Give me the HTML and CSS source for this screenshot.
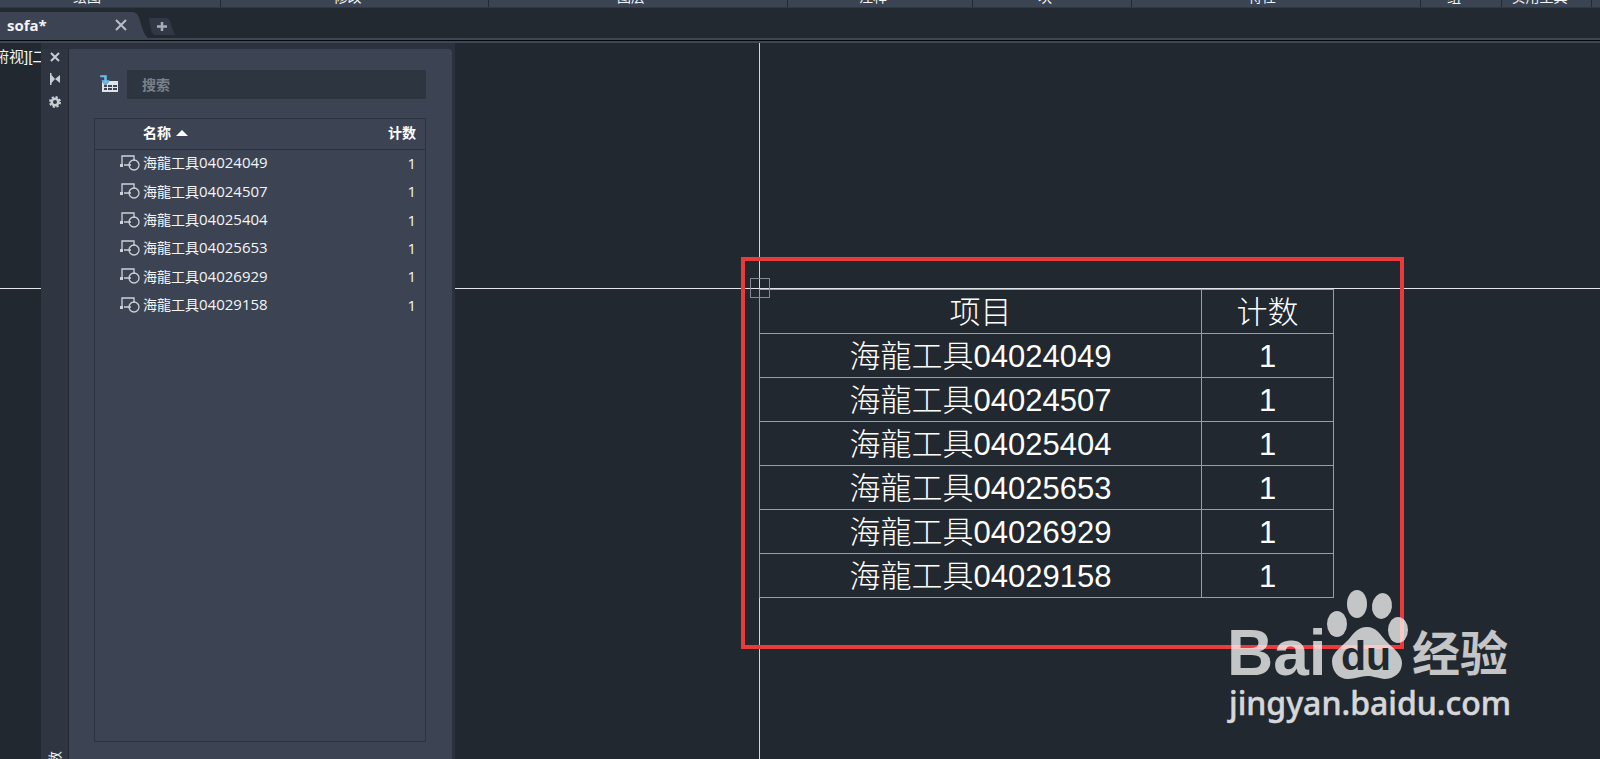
FILE: index.html
```html
<!DOCTYPE html>
<html lang="zh-CN">
<head>
<meta charset="utf-8">
<title>sofa</title>
<link rel="stylesheet" href="styles.css">
</head>
<body>
<div class="ribbon">
  <div class="panel p-draw">绘图</div>
  <div class="panel p-modify">修改</div>
  <div class="panel p-layer">图层</div>
  <div class="panel p-note">注释</div>
  <div class="panel p-block">块</div>
  <div class="panel p-props">特性</div>
  <div class="panel p-group">组</div>
  <div class="panel p-tools">实用工具</div>
  <div class="panel p-more"></div>
</div>
<nav class="tabs">
  <div class="tab">
    <span class="tab-name">sofa*</span>
    <button class="icon-btn" aria-label="关闭">
      <svg width="12" height="12" viewBox="0 0 12 12"><path d="M1 1L11 11M11 1L1 11" stroke="#b9bec6" stroke-width="2"/></svg>
    </button>
  </div>
  <svg class="tail" width="22" height="28" viewBox="0 0 22 28"><path d="M0 0C6 0 7 5 9 12C12 22 14 27 22 28H0Z" fill="#3c4453"/></svg>
  <button class="add" aria-label="新建">
    <svg width="26" height="17" viewBox="0 0 26 17"><path d="M0 0H16C21 0 22 5 23 9C24 13 25 15 26 17H7C3 17 2 12 1 7Z" fill="#323845"/><path d="M13 4V13M8 8.500H18" stroke="#a9aeb7" stroke-width="2.500"/></svg>
  </button>
</nav>
<main class="canvas">
  <div class="view-label">俯视][二</div>
  <div class="cross-h"></div>
  <div class="cross-v"></div>

  <table class="cad">
    <thead><tr><th class="cad-item">项目</th><th>计数</th></tr></thead>
    <tbody>
      <tr><td>海龍工具04024049</td><td>1</td></tr>
      <tr><td>海龍工具04024507</td><td>1</td></tr>
      <tr><td>海龍工具04025404</td><td>1</td></tr>
      <tr><td>海龍工具04025653</td><td>1</td></tr>
      <tr><td>海龍工具04026929</td><td>1</td></tr>
      <tr><td>海龍工具04029158</td><td>1</td></tr>
    </tbody>
  </table>
  <div class="pick"></div>
  <div class="frame"></div>

  <svg class="mark" width="300" height="150" viewBox="0 0 300 150">
    <g fill="#fff" opacity="0.73">
      <text class="bai" x="7" y="94">Bai</text>
      <ellipse cx="117" cy="43" rx="10" ry="13"/>
      <ellipse cx="137" cy="23" rx="10" ry="14"/>
      <ellipse cx="162" cy="25" rx="10" ry="13" transform="rotate(8 162 25)"/>
      <ellipse cx="178" cy="49" rx="10" ry="13"/>
      <path d="M147 46C156 46 160 53 165 59C171 66 182 72 182 82C182 92 174 98 164 98C157 97 153 95 147 95C141 95 135 98 128 98C118 98 112 90 112 80C112 71 122 66 129 58C134 52 138 46 147 46Z"/>
      <text class="jingyan" x="192" y="90">经验</text>
    </g>
    <text class="du" x="121" y="89">du</text>
    <text class="site" x="9" y="134">jingyan.baidu.com</text>
  </svg>

  <section class="palette">
    <div class="rail">
      <button class="icon-btn" aria-label="关闭">
        <svg width="10" height="10" viewBox="0 0 10 10"><path d="M1 1L9 9M9 1L1 9" stroke="#c9cdd4" stroke-width="2"/></svg>
      </button>
      <button class="icon-btn" aria-label="自动隐藏">
        <svg width="10" height="12" viewBox="0 0 10 12"><path d="M0 0H1.500V12H0ZM1.500 2L5 6L1.500 10ZM10 2V10L5 6Z" fill="#c9cdd4"/></svg>
      </button>
      <button class="icon-btn" aria-label="特性">
        <svg width="12" height="12" viewBox="-6 -6 12 12"><circle r="3.300" fill="none" stroke="#c9cdd4" stroke-width="2.600"/><circle r="5.100" fill="none" stroke="#c9cdd4" stroke-width="1.800" stroke-dasharray="2.200 1.805"/></svg>
      </button>
      <div class="rail-title">计数</div>
    </div>
    <div class="body">
      <div class="search-row">
        <button class="icon-btn" aria-label="插入表格">
          <svg width="18" height="17" viewBox="0 0 18 17"><path d="M2 6H18V17H2Z" fill="#dfe2e6"/><path d="M4 10H7V12H4ZM8 10H12V12H8ZM13 10H17V12H13ZM4 13H7V15H4ZM8 13H12V15H8ZM13 13H17V15H13Z" fill="#3c4453"/><path d="M0 0H7V5H10L5.500 10.500L1 5H4V2.500H0Z" fill="#6cb7ee" stroke="#3c4453" stroke-width=".4"/></svg>
        </button>
        <input class="search" type="text" placeholder="搜索" aria-label="搜索">
      </div>
      <div class="list">
        <table class="items">
          <thead><tr><th class="name-h">名称 <svg width="12" height="6" viewBox="0 0 12 6"><path d="M6 0L12 6H0Z" fill="#fff"/></svg></th><th class="count">计数</th></tr></thead>
          <tbody>
            <tr><td><div class="item"><svg width="20" height="16" viewBox="0 0 20 16"><g fill="none" stroke="#cdd2d9" stroke-width="1.300"><path d="M2 9V1H14V6M4 10H11"/><circle cx="14" cy="10" r="5"/></g><path d="M0 9H3V12H0Z" fill="#cdd2d9"/></svg><span><span class="zh">海龍工具</span>04024049</span></div></td><td class="count">1</td></tr>
            <tr><td><div class="item"><svg width="20" height="16" viewBox="0 0 20 16"><g fill="none" stroke="#cdd2d9" stroke-width="1.300"><path d="M2 9V1H14V6M4 10H11"/><circle cx="14" cy="10" r="5"/></g><path d="M0 9H3V12H0Z" fill="#cdd2d9"/></svg><span><span class="zh">海龍工具</span>04024507</span></div></td><td class="count">1</td></tr>
            <tr><td><div class="item"><svg width="20" height="16" viewBox="0 0 20 16"><g fill="none" stroke="#cdd2d9" stroke-width="1.300"><path d="M2 9V1H14V6M4 10H11"/><circle cx="14" cy="10" r="5"/></g><path d="M0 9H3V12H0Z" fill="#cdd2d9"/></svg><span><span class="zh">海龍工具</span>04025404</span></div></td><td class="count">1</td></tr>
            <tr><td><div class="item"><svg width="20" height="16" viewBox="0 0 20 16"><g fill="none" stroke="#cdd2d9" stroke-width="1.300"><path d="M2 9V1H14V6M4 10H11"/><circle cx="14" cy="10" r="5"/></g><path d="M0 9H3V12H0Z" fill="#cdd2d9"/></svg><span><span class="zh">海龍工具</span>04025653</span></div></td><td class="count">1</td></tr>
            <tr><td><div class="item"><svg width="20" height="16" viewBox="0 0 20 16"><g fill="none" stroke="#cdd2d9" stroke-width="1.300"><path d="M2 9V1H14V6M4 10H11"/><circle cx="14" cy="10" r="5"/></g><path d="M0 9H3V12H0Z" fill="#cdd2d9"/></svg><span><span class="zh">海龍工具</span>04026929</span></div></td><td class="count">1</td></tr>
            <tr><td><div class="item"><svg width="20" height="16" viewBox="0 0 20 16"><g fill="none" stroke="#cdd2d9" stroke-width="1.300"><path d="M2 9V1H14V6M4 10H11"/><circle cx="14" cy="10" r="5"/></g><path d="M0 9H3V12H0Z" fill="#cdd2d9"/></svg><span><span class="zh">海龍工具</span>04029158</span></div></td><td class="count">1</td></tr>
          </tbody>
        </table>
      </div>
    </div>
  </section>
</main>
</body>
</html>
```
FILE: styles.css
```css
* { box-sizing: border-box; }

body {
  margin: 0;
  height: 100vh;
  display: flex;
  flex-direction: column;
  overflow: hidden;
  background: #22282f;
  color: #f2f4f6;
  font-family: "Open Sans", "Noto Sans CJK SC", sans-serif;
  font-size: 15px;
}

button {
  border: 0;
  padding: 0;
  background: none;
}

.icon-btn { display: flex; }

/* ribbon footer */
.ribbon {
  display: flex;
  height: 8px;
  background: #3b4453;
  border-bottom: 1px solid #323843;
  overflow: hidden;
}

.panel {
  display: flex;
  align-items: flex-end;
  justify-content: center;
  height: 7px;
  padding: 0 14px 4px 0;
  border-right: 1px solid #242a33;
  font-family: "Noto Sans CJK SC", sans-serif;
  font-size: 14px;
  line-height: 14px;
  white-space: nowrap;
}

.p-draw { flex: 1 1 221px; padding-right: 46px; }
.p-modify { flex: 1 1 268px; }
.p-layer { flex: 1 1 299px; }
.p-note { flex: 1 1 185px; }
.p-block { flex: 1 1 159px; }
.p-props { flex: 1 1 289px; padding-right: 28px; }
.p-group { flex: 1 1 81px; }
.p-tools { flex: 1 1 90px; }
.p-more { flex: 0 0 8px; padding: 0; border: 0; }

/* file tabs */
.tabs {
  display: flex;
  height: 35px;
  padding-top: 4px;
  background: linear-gradient(#232931 30px, #3f4654 30px, #3f4654 32px, #05070c 32px, #05070c 33px, #3f4654 33px);
}

.tab {
  display: flex;
  align-items: center;
  justify-content: space-between;
  width: 132px;
  height: 28px;
  padding: 0 5px 2px 7px;
  background: #3c4453;
  font-weight: 700;
}

.tail { display: block; }

.add {
  height: 17px;
  margin-top: 6px;
  margin-left: -5px;
}

.add svg { display: block; }

/* drawing area */
.canvas {
  position: relative;
  flex: 1;
  display: flex;
  overflow: hidden;
}

.view-label {
  width: 41px;
  padding-top: 4px;
  overflow: hidden;
  white-space: nowrap;
  text-indent: -6px;
  font-family: "Liberation Sans", "Noto Sans CJK SC", sans-serif;
  font-size: 15px;
  line-height: 20px;
}

.cross-h {
  position: absolute;
  left: 0;
  right: 0;
  top: 245px;
  height: 1px;
  background: #e3e5ea;
}

.cross-v {
  position: absolute;
  left: 759px;
  top: 0;
  bottom: 0;
  width: 1px;
  background: #d3d5da;
}

.cad {
  position: absolute;
  left: 759px;
  top: 246px;
  width: 575px;
  border-collapse: collapse;
  table-layout: fixed;
  font-family: "Liberation Sans", "Noto Sans CJK SC", sans-serif;
  font-size: 31px;
  font-weight: 300;
  line-height: 40px;
  color: #fff;
  text-align: center;
}

.cad th,
.cad td {
  height: 44px;
  padding: 2px 0 0;
  border: 1px solid #9a9da5;
  font-weight: 300;
}

.cad-item { width: 442px; }

.pick {
  position: absolute;
  left: 750px;
  top: 235px;
  width: 20px;
  height: 20px;
  border: 1px solid #858990;
}

.frame {
  position: absolute;
  left: 741px;
  top: 214px;
  width: 663px;
  height: 392px;
  border: 4px solid #ea3a3c;
}

.mark {
  position: absolute;
  left: 1220px;
  top: 538px;
}

.bai {
  font-family: "Liberation Sans", sans-serif;
  font-size: 64px;
  font-weight: 700;
}

.jingyan {
  font-family: "Noto Sans CJK SC", sans-serif;
  font-size: 48px;
  font-weight: 700;
}

.du {
  font-family: "Liberation Sans", sans-serif;
  font-size: 41px;
  font-weight: 700;
  fill: #22282f;
}

.site {
  font-family: "Noto Sans", sans-serif;
  font-size: 32px;
  font-weight: 500;
  fill: #d5d7d9;
  stroke: #d5d7d9;
  stroke-width: 0.5px;
}

/* count palette */
.palette {
  position: relative;
  flex: none;
  display: flex;
  width: 414px;
  padding: 6px 3px 0 0;
  background: #2c323d;
}

.rail {
  flex: none;
  display: flex;
  flex-direction: column;
  align-items: center;
  gap: 11px;
  width: 27px;
  padding: 3px 0 0;
  background: #2f3541;
}

.rail-title {
  margin-top: auto;
  margin-bottom: -20px;
  writing-mode: sideways-lr;
  font-size: 14px;
  line-height: 16px;
}

.body {
  flex: 1;
  min-width: 0;
  display: flex;
  flex-direction: column;
  gap: 19px;
  padding: 21px 26px 17px 25px;
  background: #3c4453;
  border-left: 1px solid #232932;
  border-top-right-radius: 4px;
}

.search-row {
  display: flex;
  align-items: center;
  gap: 9px;
  padding-left: 6px;
}

.search-row .icon-btn { padding-bottom: 2px; }

.search {
  flex: 1;
  min-width: 0;
  height: 29px;
  padding: 0 15px 2px;
  border: 0;
  background: #2d3541;
  font-family: "Noto Sans CJK SC", sans-serif;
  font-size: 14px;
  font-weight: 700;
  color: #f2f4f6;
}

.search::placeholder { color: #7b818b; }

.list {
  flex: 1;
  border: 1px solid #2c333e;
}

.items {
  width: 100%;
  height: 201px;
  border-collapse: collapse;
  line-height: 20px;
}

.items th,
.items td {
  padding: 0 0 2px;
  text-align: left;
}

.items th {
  height: 30px;
  padding-bottom: 4px;
  border-bottom: 1px solid #2a313c;
  font-family: "Noto Sans CJK SC", sans-serif;
  font-size: 14px;
  color: #fff;
}

.items .name-h { padding-left: 48px; }

.name-h svg {
  margin-left: 2px;
  vertical-align: 2px;
}

.items .count {
  padding-right: 9px;
  text-align: right;
}

.item {
  display: flex;
  align-items: center;
  gap: 3px;
  padding-left: 25px;
}

.zh { font-size: 14px; }
```
